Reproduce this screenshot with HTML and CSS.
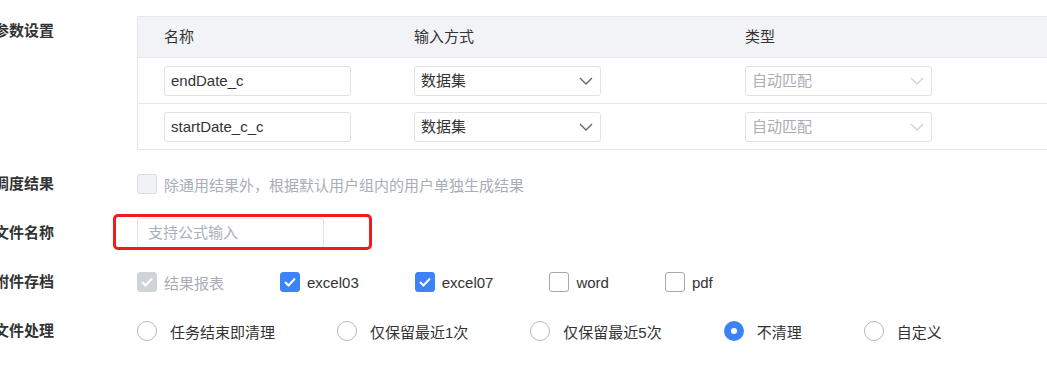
FILE: index.html
```html
<!DOCTYPE html>
<html lang="zh-CN">
<head>
  <meta charset="UTF-8">
  <title>任务设置</title>
  <link rel="stylesheet" href="styles.css">
</head>
<body>

  <div class="form">

    <!-- 参数设置 -->
    <div class="form-row">
      <div class="form-label">参数设置</div>
      <div class="param-table">
        <div class="param-head">
          <div class="cell">名称</div>
          <div class="cell">输入方式</div>
          <div class="cell">类型</div>
        </div>
        <div class="param-row">
          <div class="cell"><div class="input">endDate_c</div></div>
          <div class="cell">
            <div class="select">数据集
              <svg class="arrow" width="14" height="8" viewBox="0 0 14 8"><polyline points="1,1 7,7 13,1" fill="none" stroke="currentColor" stroke-width="1.3"/></svg>
            </div>
          </div>
          <div class="cell">
            <div class="select disabled">自动匹配
              <svg class="arrow" width="14" height="8" viewBox="0 0 14 8"><polyline points="1,1 7,7 13,1" fill="none" stroke="currentColor" stroke-width="1.3"/></svg>
            </div>
          </div>
        </div>
        <div class="param-row">
          <div class="cell"><div class="input">startDate_c_c</div></div>
          <div class="cell">
            <div class="select">数据集
              <svg class="arrow" width="14" height="8" viewBox="0 0 14 8"><polyline points="1,1 7,7 13,1" fill="none" stroke="currentColor" stroke-width="1.3"/></svg>
            </div>
          </div>
          <div class="cell">
            <div class="select disabled">自动匹配
              <svg class="arrow" width="14" height="8" viewBox="0 0 14 8"><polyline points="1,1 7,7 13,1" fill="none" stroke="currentColor" stroke-width="1.3"/></svg>
            </div>
          </div>
        </div>
      </div>
    </div>

    <!-- 调度结果 -->
    <div class="form-row">
      <div class="form-label">调度结果</div>
      <div class="options">
        <label class="check disabled">
          <span class="box"></span>
          <span>除通用结果外，根据默认用户组内的用户单独生成结果</span>
        </label>
      </div>
    </div>

    <!-- 文件名称 -->
    <div class="form-row">
      <div class="form-label">文件名称</div>
      <div class="options">
        <div class="name-wrap">
          <div class="input name-input placeholder">支持公式输入</div>
          <div class="mark"></div>
        </div>
      </div>
    </div>

    <!-- 附件存档 -->
    <div class="form-row">
      <div class="form-label">附件存档</div>
      <div class="options checks">
        <label class="check disabled checked">
          <span class="box"><svg width="14" height="14" viewBox="0 0 14 14"><polyline points="2,7 5.5,10.5 12,3.5" fill="none" stroke="#fff" stroke-width="2"/></svg></span>
          <span>结果报表</span>
        </label>
        <label class="check checked">
          <span class="box"><svg width="14" height="14" viewBox="0 0 14 14"><polyline points="2,7 5.5,10.5 12,3.5" fill="none" stroke="#fff" stroke-width="2"/></svg></span>
          <span>excel03</span>
        </label>
        <label class="check checked">
          <span class="box"><svg width="14" height="14" viewBox="0 0 14 14"><polyline points="2,7 5.5,10.5 12,3.5" fill="none" stroke="#fff" stroke-width="2"/></svg></span>
          <span>excel07</span>
        </label>
        <label class="check">
          <span class="box"></span>
          <span>word</span>
        </label>
        <label class="check">
          <span class="box"></span>
          <span>pdf</span>
        </label>
      </div>
    </div>

    <!-- 文件处理 -->
    <div class="form-row">
      <div class="form-label">文件处理</div>
      <div class="options radios">
        <label class="radio"><span class="dot"></span><span>任务结束即清理</span></label>
        <label class="radio"><span class="dot"></span><span>仅保留最近1次</span></label>
        <label class="radio"><span class="dot"></span><span>仅保留最近5次</span></label>
        <label class="radio checked"><span class="dot"></span><span>不清理</span></label>
        <label class="radio"><span class="dot"></span><span>自定义</span></label>
      </div>
    </div>

  </div>

</body>
</html>
```

FILE: styles.css
```css
body {
  font-family: "Liberation Sans", "Noto Sans CJK SC", sans-serif;
  font-size: 15px;
  color: #333;
  background: #fff;
  margin: 0;
  padding: 16px 0 0;
  overflow: hidden;
}
.form {
  margin-left: -8px;
}
.form-row {
  display: grid;
  grid-template-columns: 62px 1fr;
  column-gap: 83px;
  margin-bottom: 19px;
}
.form-label {
  font-weight: bold;
  text-align: right;
  line-height: 30px;
  white-space: nowrap;
  color: #333;
}

/* param table */
.param-table {
  width: 930px;
  border: 1px solid #e4e7ed;
}
.param-head, .param-row {
  display: grid;
  grid-template-columns: 250px 331px 1fr;
}
.param-head {
  background: #f2f3f7;
  height: 40px;
  line-height: 40px;
}
.param-row {
  padding: 8px 0 7px;
  border-top: 1px solid #e4e7ed;
}
.cell {
  padding-left: 26px;
}
.input, .select {
  box-sizing: border-box;
  width: 187px;
  height: 30px;
  line-height: 28px;
  border: 1px solid #dfe2e8;
  border-radius: 3px;
  padding-left: 6px;
  color: #333;
  background: #fff;
}
.select {
  display: flex;
  justify-content: space-between;
  align-items: center;
  padding-right: 7px;
}
.select .arrow {
  color: #5c6470;
}
.select.disabled {
  color: #a9adb5;
}
.select.disabled .arrow {
  color: #cdd1d8;
}

/* options */
.options {
  display: flex;
  align-items: center;
  min-height: 30px;
}
.checks {
  gap: 56px;
}
.check, .radio {
  display: flex;
  align-items: center;
  white-space: nowrap;
}
.check .box {
  box-sizing: border-box;
  width: 20px;
  height: 20px;
  border: 1px solid #a3a9b3;
  border-radius: 3px;
  margin-right: 7px;
  display: flex;
  align-items: center;
  justify-content: center;
  background: #fff;
}
.check.checked .box {
  background: #3b83f6;
  border-color: #3b83f6;
}
.check.disabled {
  color: #a9adb5;
}
.check.disabled .box {
  background: #f0f2f6;
  border-color: #d8dbe1;
}
.check.disabled.checked .box {
  background: #d0d3d9;
  border-color: #d0d3d9;
}

.radios {
  gap: 62px;
}
.radio .dot {
  box-sizing: border-box;
  width: 20px;
  height: 20px;
  border: 1.5px solid #b3b7bf;
  border-radius: 50%;
  margin-right: 13px;
}
.radio.checked .dot {
  border: 7px solid #3b83f6;
}

/* file name */
.name-wrap {
  position: relative;
}
.name-input {
  padding-left: 10px;
}
.placeholder {
  color: #aab0ba;
}
.mark {
  position: absolute;
  left: -24px;
  top: -4px;
  width: 259px;
  height: 36px;
  box-sizing: border-box;
  border: 3px solid #f01c1c;
  border-radius: 5px;
}
```
